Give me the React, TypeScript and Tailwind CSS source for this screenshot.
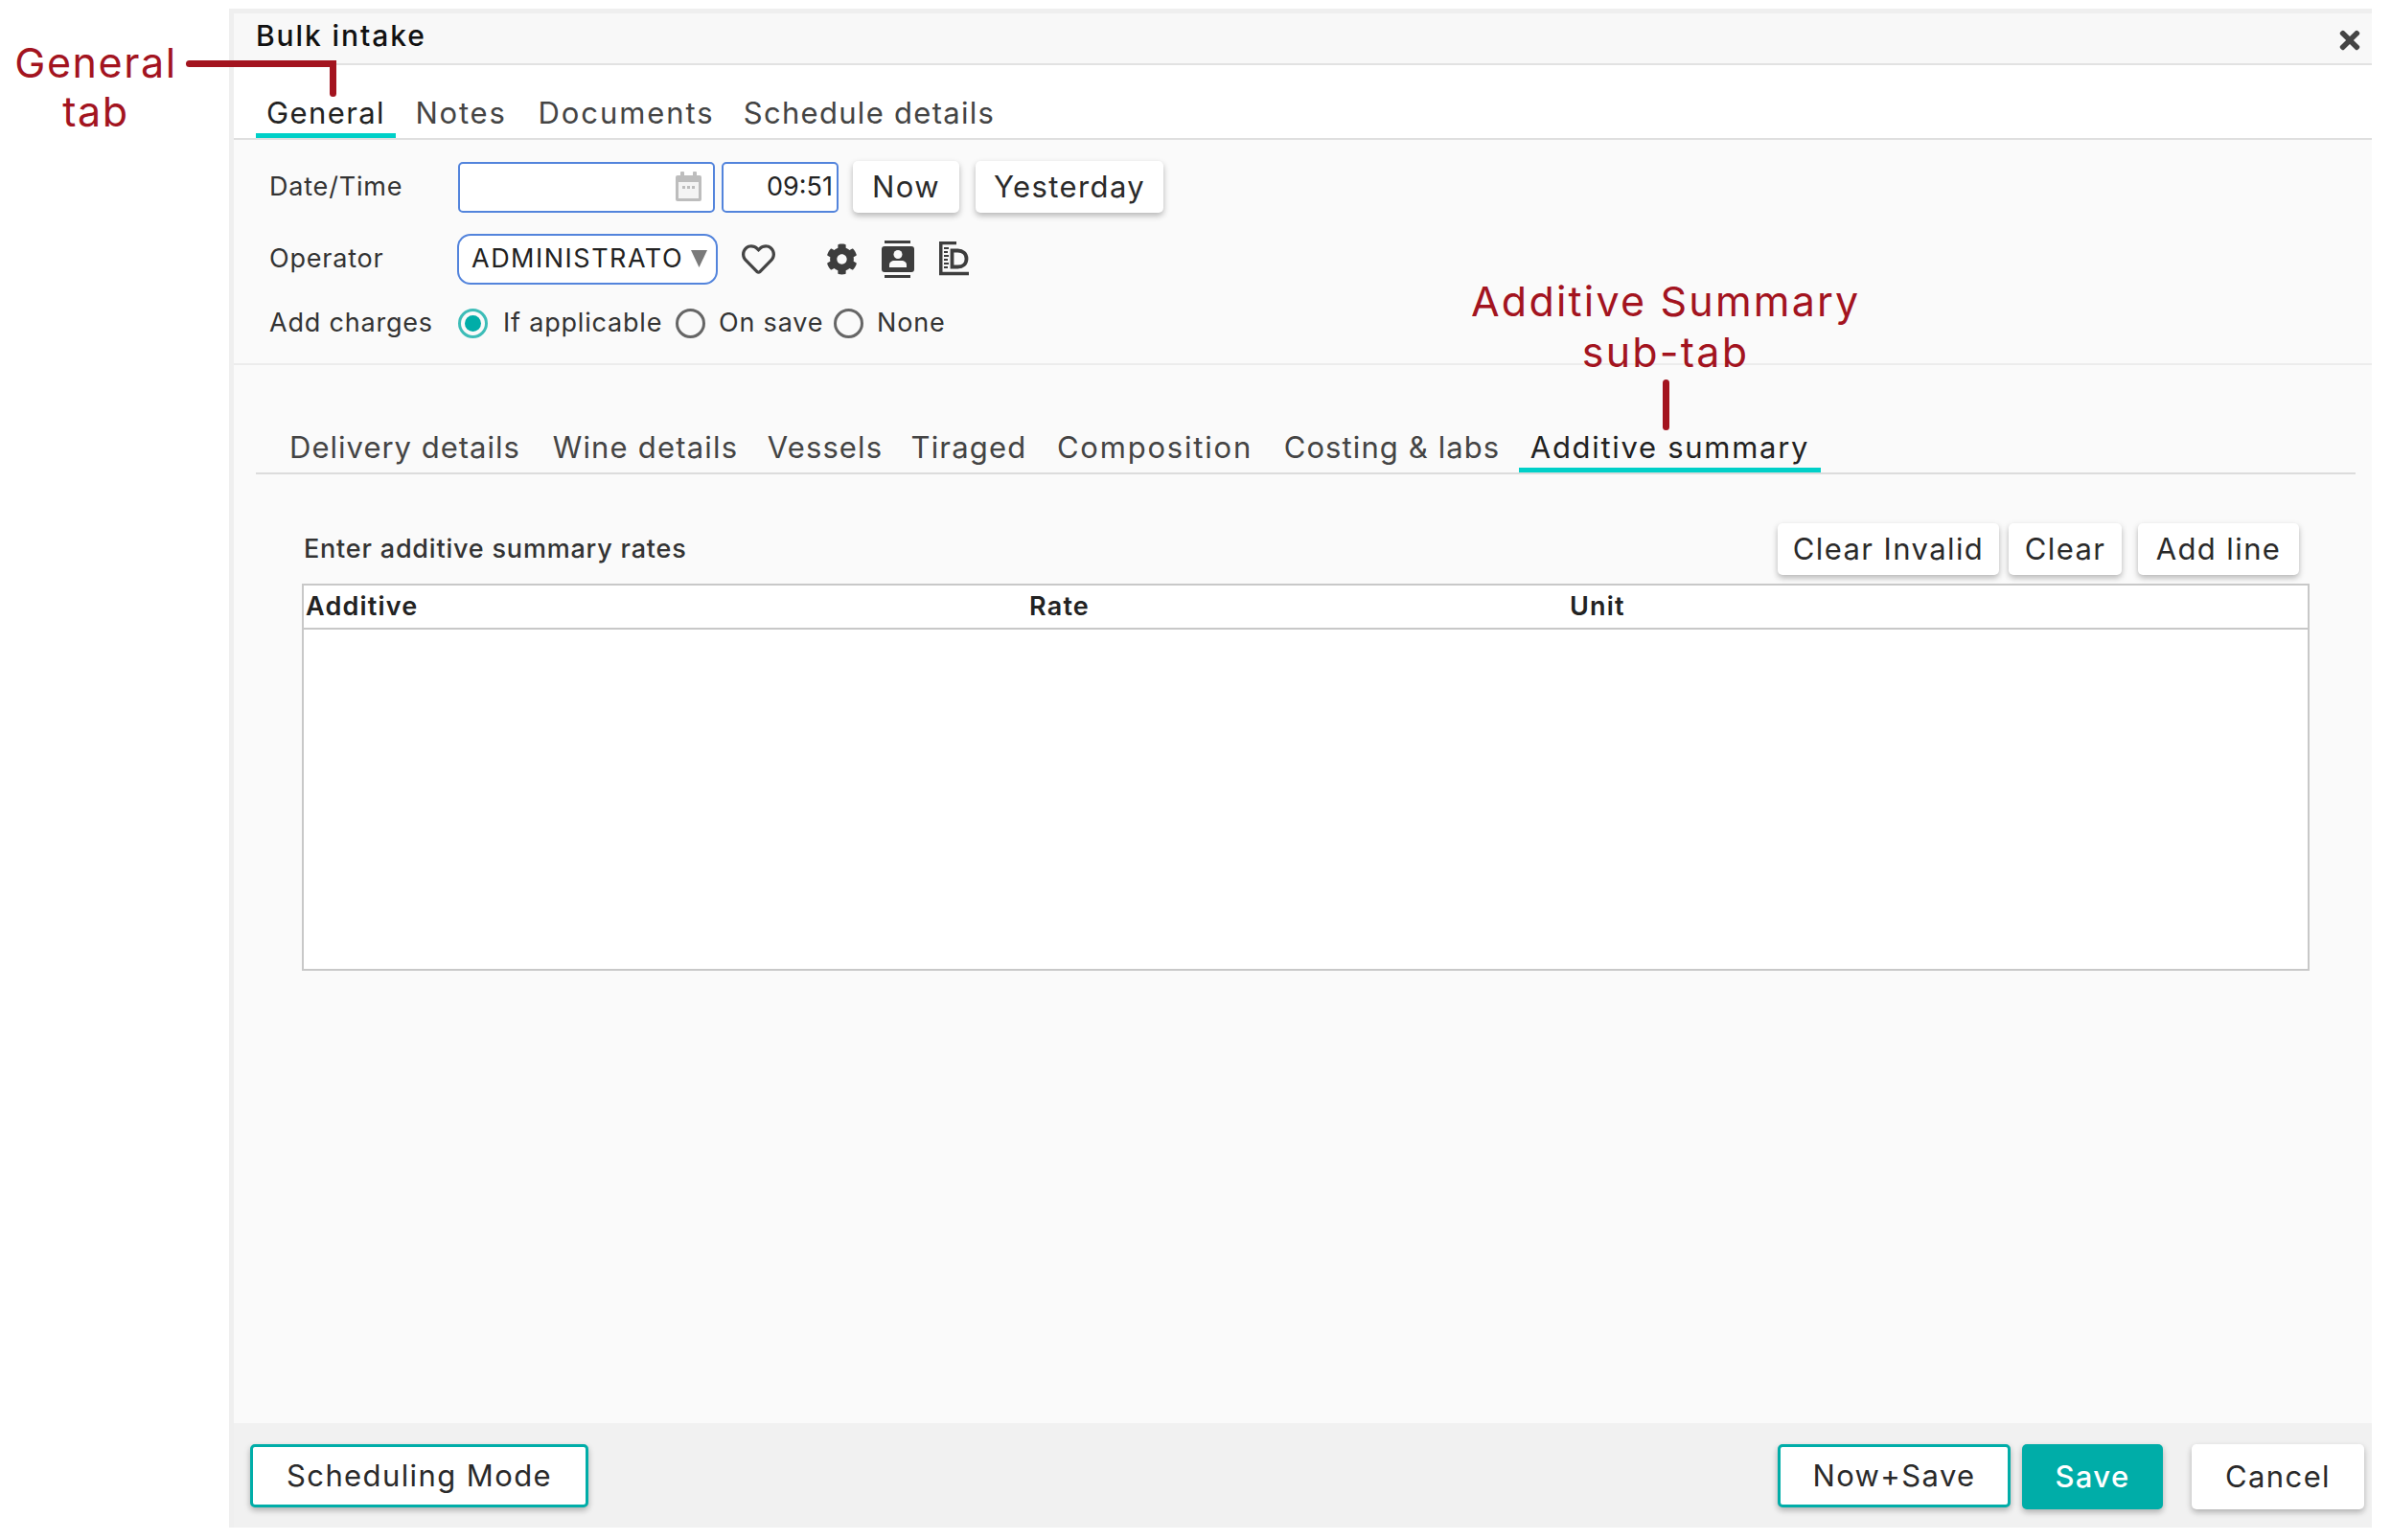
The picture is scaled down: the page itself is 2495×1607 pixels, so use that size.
import React from "react";
import { FaCog, FaRegHeart, FaTimes } from "react-icons/fa";

const font = { fontFamily: "Inter, 'Noto Sans', sans-serif" };

function Tab({ label, active, w }: { label: string; active?: boolean; w: string }) {
  return (
    <div className={`flex h-full items-center justify-center whitespace-nowrap border-b-[5px] text-[31px] ${w} ${active ? "border-[#00d0c8] text-[#222]" : "border-transparent text-[#444]"}`}>
      {label}
    </div>
  );
}

function Btn({ label, cls }: { label: string; cls: string }) {
  return (
    <button className={`flex items-center justify-center whitespace-nowrap rounded-[5px] bg-white text-[31px] tracking-[1.4px] text-[#2a2a2a] shadow-[0_3px_6px_rgba(0,0,0,0.28)] ${cls}`}>
      {label}
    </button>
  );
}

function Radio({ on }: { on?: boolean }) {
  return (
    <span className={`flex h-[31px] w-[31px] shrink-0 items-center justify-center rounded-full border-[3px] ${on ? "border-[#3dbdb8]" : "border-[#666]"}`}>
      {on && <span className="h-[17px] w-[17px] rounded-full bg-[#00ada8]" />}
    </span>
  );
}

function CalendarIcon() {
  return (
    <svg width="29" height="32" viewBox="0 0 29 32" className="block">
      <rect x="1" y="4" width="27" height="27" rx="2" fill="#bdbdbd" />
      <rect x="6" y="0" width="4" height="7" rx="1" fill="#bdbdbd" />
      <rect x="19" y="0" width="4" height="7" rx="1" fill="#bdbdbd" />
      <rect x="4" y="11" width="21" height="17" fill="#f4f4f4" />
      <rect x="8" y="15" width="3" height="3" fill="#bdbdbd" />
      <rect x="13" y="15" width="3" height="3" fill="#bdbdbd" />
      <rect x="18" y="15" width="3" height="3" fill="#bdbdbd" />
    </svg>
  );
}

function ContactIcon() {
  return (
    <svg width="34" height="39" viewBox="0 0 34 39" className="block">
      <rect x="3" y="0" width="27" height="3" fill="#3d3d3d" />
      <rect x="0" y="6" width="34" height="27" rx="3" fill="#3d3d3d" />
      <rect x="3" y="36" width="27" height="3" fill="#3d3d3d" />
      <circle cx="17" cy="14.500" r="4.500" fill="#fafafa" />
      <path d="M8 28v-2.500c0-3 2.500-4.500 5-4.500h8c2.500 0 5 1.500 5 4.500V28z" fill="#fafafa" />
    </svg>
  );
}

function LedgerIcon() {
  return (
    <svg width="31" height="36" viewBox="0 0 31 36" fill="none" stroke="#3d3d3d" className="block">
      <path d="M18 1.500H1.750v32H31" strokeWidth="3.500" />
      <path d="M5 7h5M5 11h4M5 15h5M5 19h4M5 23h5M5 27h4" strokeWidth="2" />
      <path d="M13.500 9.500v17h6c5 0 9-3 9-8.500s-4-8.500-9-8.500z" strokeWidth="3.800" />
    </svg>
  );
}

export default function App() {
  return (
    <div className="relative h-[1607px] w-[2495px] overflow-hidden bg-white pt-[9px] pl-[239px]" style={font}>
      <div className="flex h-[1585px] w-[2236px] flex-col border-t-[5px] border-l-[5px] border-[#efefef] bg-[#fafafa]">
        <div className="relative flex h-[54px] shrink-0 items-center border-b-2 border-[#e2e2e2] bg-[#f8f8f8] pl-[23px] pb-[6px] text-[30px] font-medium tracking-[1.900px] text-[#111]">
          Bulk intake
          <FaTimes className="absolute top-[13px] right-[8px] text-[30px] text-[#444]" />
        </div>
        <div className="flex h-[78px] shrink-0 items-end border-b-2 border-[#dfdfdf] bg-white pl-[23px]">
          <div className="flex h-[47px] items-stretch">
            <Tab label="General" active w="w-[146px] mr-[10px] tracking-[1.4px]" />
            <Tab label="Notes" w="w-[116px] mr-[12px] tracking-[1.8px]" />
            <Tab label="Documents" w="w-[205px] mr-[9px] tracking-[1.9px]" />
            <Tab label="Schedule details" w="w-[284px] tracking-[1.3px]" />
          </div>
        </div>

        <div className="flex h-[235px] shrink-0 flex-col border-b-2 border-[#ececec] pl-[37px] text-[27px] tracking-[0.8px] text-[#333]">
          <div className="mt-[22px] flex h-[54px] items-center">
            <span className="w-[197px]">Date/Time</span>
            <div className="flex h-[53px] w-[268px] items-center justify-end rounded-[5px] border-2 border-[#5384dc] bg-white pr-[11px]">
              <CalendarIcon />
            </div>
            <div className="ml-[7px] flex h-[53px] w-[122px] items-center justify-end rounded-[5px] border-2 border-[#5384dc] bg-white pr-[4px] tracking-normal text-[#222]">
              09:51
            </div>
            <Btn label="Now" cls="ml-[15px] h-[54px] w-[111px]" />
            <Btn label="Yesterday" cls="ml-[17px] h-[54px] w-[196px]" />
          </div>
          <div className="mt-[21px] flex h-[54px] items-center">
            <span className="w-[196px]">Operator</span>
            <div className="flex h-[53px] w-[272px] items-center rounded-[14px] border-2 border-[#5384dc] bg-white pl-[13px] text-[#222]">
              <span className="w-[221px] overflow-hidden whitespace-nowrap tracking-[1.500px]">ADMINISTRATOR</span>
              <svg width="17" height="20" viewBox="0 0 17 20" className="ml-[8px]"><path d="M0 1h17l-8.500 18z" fill="#7a7a7a" /></svg>
            </div>
            <FaRegHeart className="ml-[25px] text-[35px] text-[#444]" />
            <FaCog className="ml-[53px] text-[33px] text-[#3d3d3d]" />
            <span className="ml-[25px]"><ContactIcon /></span>
            <span className="ml-[26px]"><LedgerIcon /></span>
          </div>
          <div className="mt-[21px] flex h-[38px] items-center">
            <span className="w-[197px]">Add charges</span>
            <Radio on />
            <span className="ml-[16px] w-[180px] whitespace-nowrap">If applicable</span>
            <Radio />
            <span className="ml-[14px] w-[120px] whitespace-nowrap">On save</span>
            <Radio />
            <span className="ml-[14px] whitespace-nowrap">None</span>
          </div>
        </div>

        <div className="flex min-h-0 flex-1 flex-col">
          <div className="ml-[23px] mr-[17px] mt-[66px] flex h-[48px] shrink-0 items-stretch border-b-2 border-[#dcdcdc] pl-[23px]">
            <Tab label="Delivery details" w="w-[265px] mr-[10px] tracking-[1px]" />
            <Tab label="Wine details" w="w-[217px] mr-[9px] tracking-[1.2px]" />
            <Tab label="Vessels" w="w-[140px] mr-[9px] tracking-[1.1px]" />
            <Tab label="Tiraged" w="w-[142px] mr-[9px] tracking-[1.2px]" />
            <Tab label="Composition" w="w-[228px] mr-[9px] tracking-[1.8px]" />
            <Tab label="Costing & labs" w="w-[249px] mr-[8px] tracking-[1.1px]" />
            <Tab label="Additive summary" active w="w-[315px] tracking-[1.7px]" />
          </div>
          <div className="ml-[71px] mr-[65px] mt-[51px] flex h-[54px] shrink-0 items-center justify-between">
            <span className="pl-[2px] text-[27px] font-medium tracking-[0.8px] text-[#333]">Enter additive summary rates</span>
            <div className="mr-[11px] flex">
              <Btn label="Clear Invalid" cls="h-[54px] w-[231px]" />
              <Btn label="Clear" cls="ml-[10px] h-[54px] w-[118px]" />
              <Btn label="Add line" cls="ml-[17px] h-[54px] w-[168px]" />
            </div>
          </div>
          <div className="ml-[71px] mr-[65px] mt-[9px] h-[404px] shrink-0 border-2 border-[#c8c8c8] bg-white">
            <div className="flex h-[46px] items-center border-b-2 border-[#c8c8c8] pl-[2px] text-[27px] font-semibold tracking-[1.200px] text-[#222]">
              <span className="w-[755px]">Additive</span>
              <span className="w-[564px]">Rate</span>
              <span>Unit</span>
            </div>
          </div>
          <div className="mt-auto flex h-[109px] shrink-0 items-start bg-[#f1f1f1] pt-[22px] pl-[17px]">
            <Btn label="Scheduling Mode" cls="h-[66px] w-[353px] border-[3px] border-[#00ada8]" />
            <Btn label="Now+Save" cls="ml-auto h-[66px] w-[243px] border-[3px] border-[#00ada8]" />
            <Btn label="Save" cls="ml-[12px] h-[68px] w-[147px] !bg-[#00ada8] font-medium !text-white" />
            <Btn label="Cancel" cls="ml-[30px] mr-[8px] h-[68px] w-[180px]" />
          </div>
        </div>
      </div>

      {/* Callouts over the screenshot */}
      <div className="absolute top-[40px] left-[14px] w-[172px] text-center text-[43px] leading-[51px] tracking-[1.600px] text-[#a3141f]">
        <div className="whitespace-nowrap">General</div>
        <div>tab</div>
      </div>
      <div className="absolute top-[63px] left-[194px] h-[7px] w-[157px] rounded-full bg-[#a3141f]" />
      <div className="absolute top-[63px] left-[344px] h-[38px] w-[7px] rounded-b-full bg-[#a3141f]" />
      <div className="absolute top-[288px] left-[1535px] w-[406px] text-center text-[43px] leading-[53px] tracking-[2.200px] text-[#a3141f]">
        <div className="whitespace-nowrap">Additive Summary</div>
        <div>sub-tab</div>
      </div>
      <div className="absolute top-[396px] left-[1735px] h-[53px] w-[7px] rounded-full bg-[#a3141f]" />
    </div>
  );
}
